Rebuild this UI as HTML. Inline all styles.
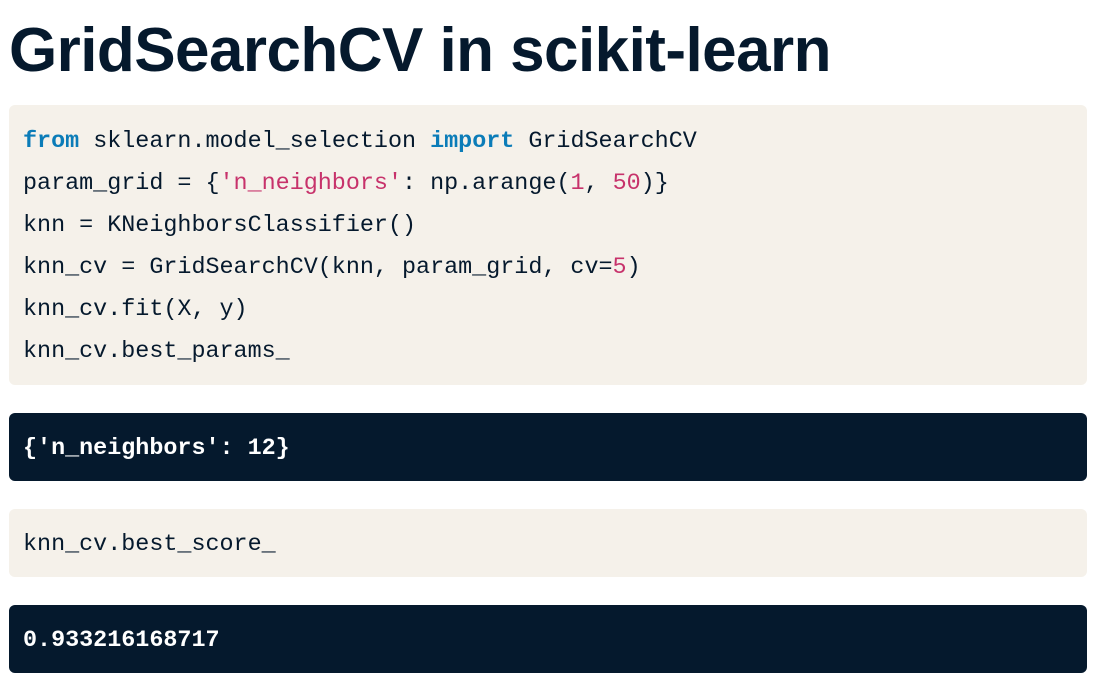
<!DOCTYPE html>
<html><head><style>
body{margin:0;background:#fff;width:1108px;height:697px;overflow:hidden;position:relative;font-family:"Liberation Sans",sans-serif;}
h1{position:absolute;left:9px;top:11px;margin:0;font-size:62px;font-weight:bold;color:#05192d;letter-spacing:-0.55px;line-height:80px;}
.b{position:absolute;left:9px;width:1078px;border-radius:6px;font-family:"Liberation Mono",monospace;font-size:23.4px;}
.l{background:#f5f1ea;color:#05192d;}
.d{background:#05192d;color:#fff;font-weight:bold;}
.line{position:absolute;left:14px;white-space:pre;line-height:30px;}
.k{color:#0b7cb8;font-weight:bold}
.s{color:#c7326b}
</style></head><body>
<h1>GridSearchCV in scikit-learn</h1>
<div class="b l" style="top:105px;height:280px">
<div class="line" style="top:22px"><span class="k">from</span> sklearn.model_selection <span class="k">import</span> GridSearchCV</div>
<div class="line" style="top:64px">param_grid = {<span class="s">'n_neighbors'</span>: np.arange(<span class="s">1</span>, <span class="s">50</span>)}</div>
<div class="line" style="top:106px">knn = KNeighborsClassifier()</div>
<div class="line" style="top:148px">knn_cv = GridSearchCV(knn, param_grid, cv=<span class="s">5</span>)</div>
<div class="line" style="top:190px">knn_cv.fit(X, y)</div>
<div class="line" style="top:232px">knn_cv.best_params_</div>
</div>
<div class="b d" style="top:413px;height:68px"><div class="line" style="top:21px">{'n_neighbors': 12}</div></div>
<div class="b l" style="top:509px;height:68px"><div class="line" style="top:21px">knn_cv.best_score_</div></div>
<div class="b d" style="top:605px;height:68px"><div class="line" style="top:21px">0.933216168717</div></div>
</body></html>
